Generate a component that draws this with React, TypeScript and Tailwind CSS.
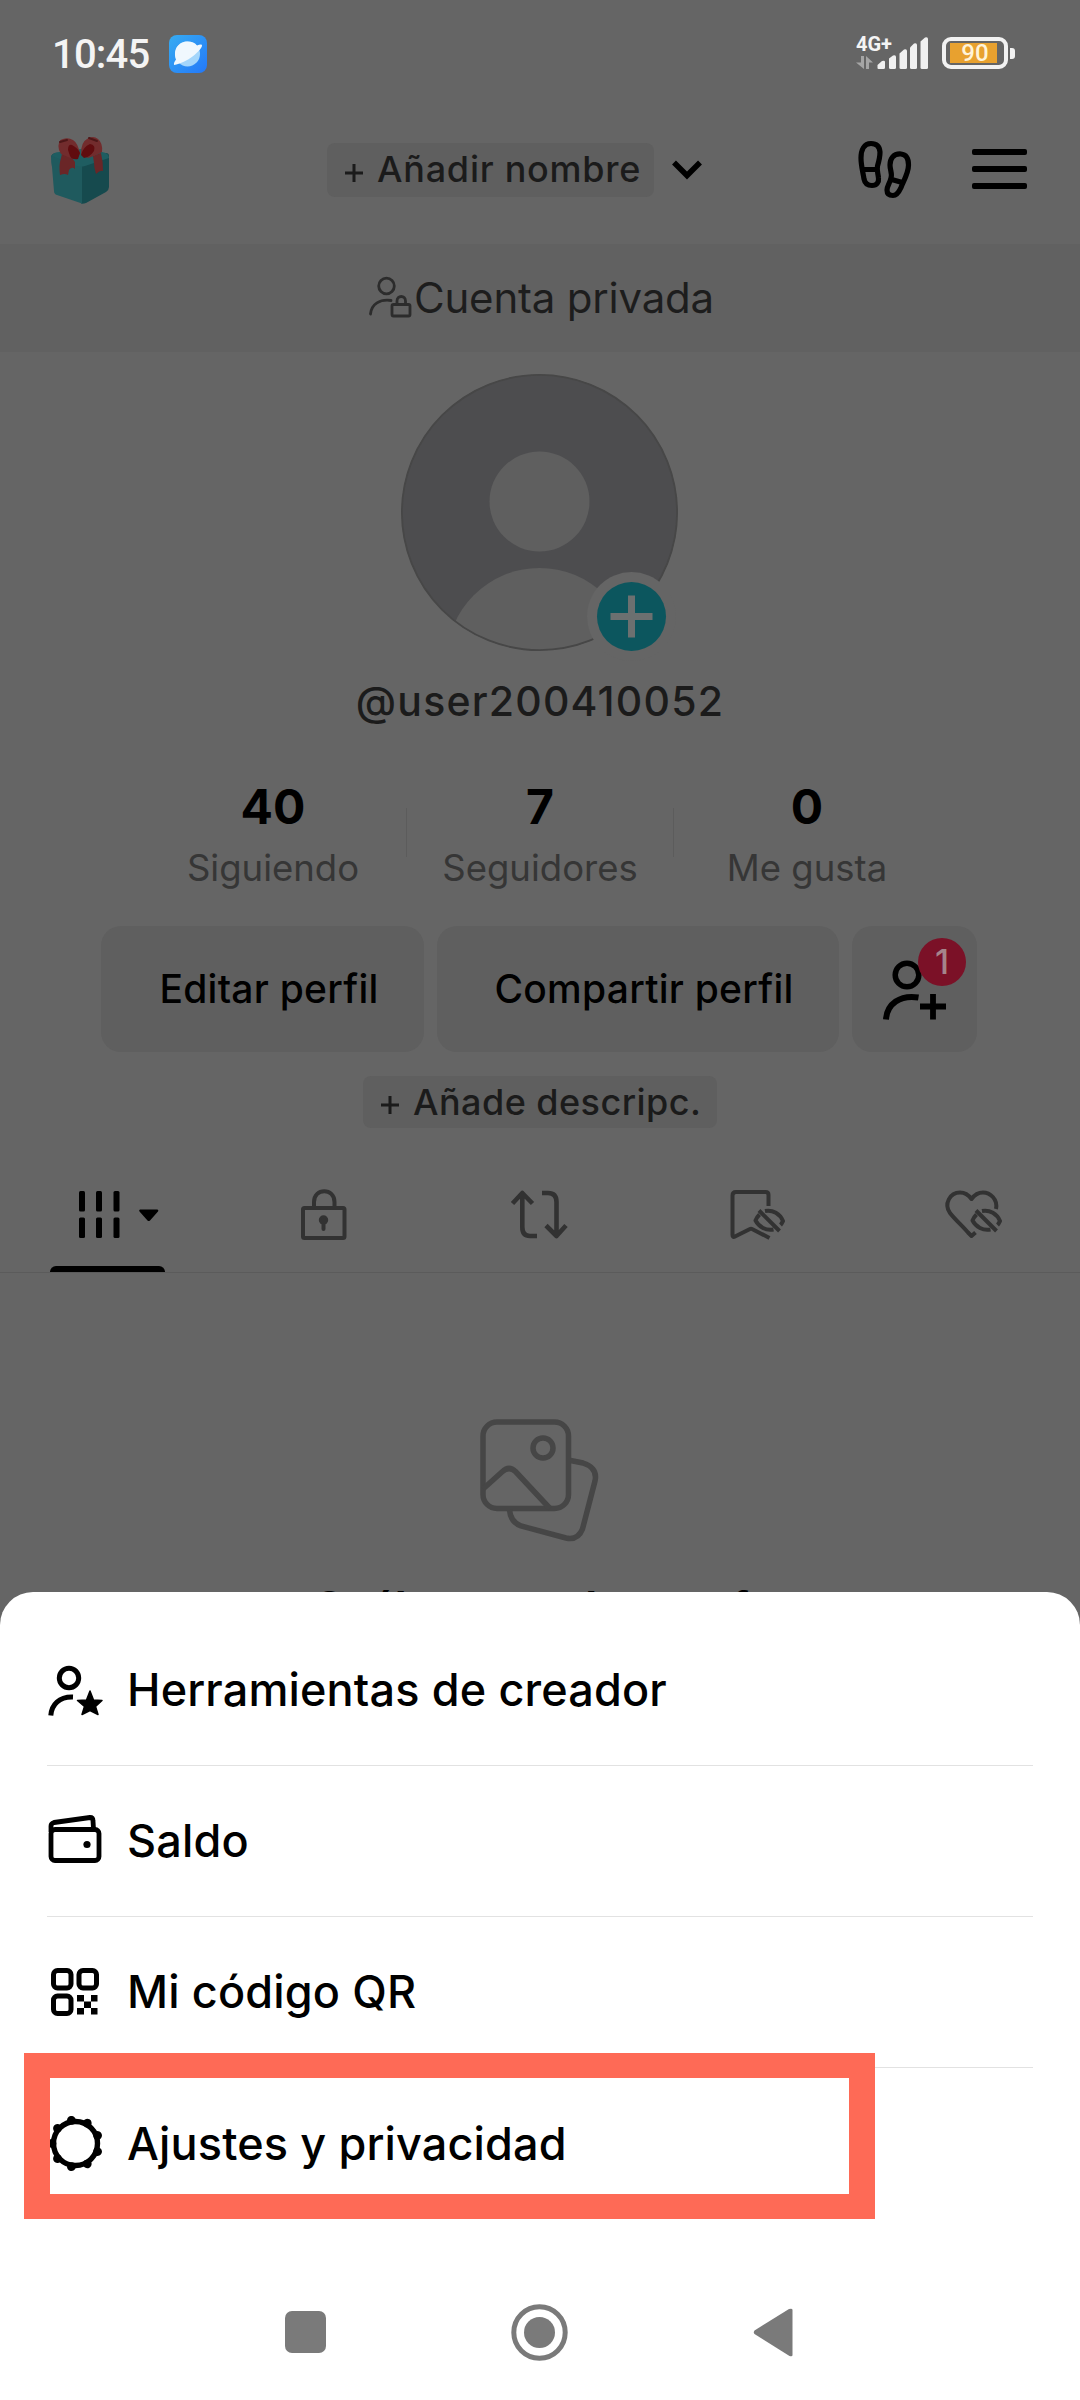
import React from "react";

function StatusBar() {
  return (
    <div className="flex h-[105px] items-center pl-[52px] pr-[65px] pt-[5px]">
      <span className="font-['Roboto',sans-serif] text-[40px] font-medium leading-[48px] tracking-[-0.8px] text-[#f4f4f4]">10:45</span>
      <svg className="ml-[19px] mt-[-2px]" width="38" height="38" viewBox="0 0 38 38">
        <defs>
          <linearGradient id="appBg" x1="0" y1="0" x2="1" y2="1">
            <stop offset="0" stopColor="#36acf2" />
            <stop offset="1" stopColor="#2478f8" />
          </linearGradient>
        </defs>
        <rect width="38" height="38" rx="8" fill="url(#appBg)" />
        <circle cx="18.500" cy="19" r="12.500" fill="#a4d6fb" />
        <path d="M5 30C4.500 28 6 26 7 24.500C3.500 14 10 6.500 18.500 6.500C23 6.500 26 8 28 10.500C30.500 9.500 33 9 33 10.500C33 15 18 28 5 30Z" fill="#f0f8fe" />
      </svg>
      <div className="ml-auto mt-[-4px] flex items-center">
        <div className="mr-[-11px] flex h-[36px] w-[32px] flex-col">
          <span className="whitespace-nowrap font-['Roboto',sans-serif] text-[20px] font-bold leading-[18px] text-[#f4f4f4]">4G+</span>
          <svg className="mt-[3px]" width="17" height="13" viewBox="0 0 17 13" fill="#a5a5a5">
            <path d="M5 0H8V13L0 6.500H5ZM10 13V0L17 6.500H13V13Z" />
          </svg>
        </div>
        <svg width="52" height="34" viewBox="877 37 52 34" fill="#f0f0f0">
          <path d="M877.500 69V66L882 62Q885 61 885 63V68.500Q885 70 883.500 70H878.500Q877.500 70 877.500 69Z" />
          <path d="M889 59.500L893 56.500Q896 55.500 896 58V68.500Q896 70 894.500 70H890.500Q889 70 889 68.500Z" />
          <path d="M899.500 54.500L904 50.500Q907 49.500 907 52V68.500Q907 70 905.500 70H901Q899.500 70 899.500 68.500Z" />
          <path d="M910 48.500L914 44.500Q917 43.500 917 46V68.500Q917 70 915.500 70H911.500Q910 70 910 68.500Z" />
          <path d="M920.500 42.500L925 38.500Q928 37.500 928 40V68.500Q928 70 926.500 70H922Q920.500 70 920.500 68.500Z" />
        </svg>
        <div className="ml-[13px] flex h-[32px] w-[66px] items-center rounded-[9px] border-[4px] border-[#f2f2f2] pl-[4px]">
          <div className="flex h-[20px] w-[47px] items-center justify-center bg-[#e8a12f] pl-[3px]">
            <span className="font-['Roboto',sans-serif] text-[24px] font-medium leading-[20px] tracking-[0.2px] text-[#fff3d8]">90</span>
          </div>
        </div>
        <div className="ml-[2px] h-[11px] w-[5px] rounded-r-[3px] bg-[#f2f2f2]" />
      </div>
    </div>
  );
}

function GiftIcon() {
  return (
    <svg className="ml-[40px]" width="90" height="90" viewBox="0 0 90 90">
      <path d="M11 32Q12 28 16 28L41 37L66 28Q69 28 69 31V62Q69 65 66 67L46 78Q43 79 41 78.500V44Z" fill="#164a4e" />
      <path d="M11 32Q11 29 15 29L39 37Q43 39 42 45V78.500L17 70Q14 69 14 66L12 42Q11 38 11 32Z" fill="#1f5a5e" />
      <path d="M12 31Q13 27 20 27L41 24L62 27Q69 28 69 33L45 41Q41 42 37 41Z" fill="#1f5d61" />
      <path d="M22 29L32 33L35 37V44Q32 41 29 45L28 50Q25 48 20 50Q19 42 20 37ZM53 31L61 28Q63 36 63 46Q60 45 56 49Q54 43 54 38Z" fill="#6a2627" />
      <path d="M19 25Q17 15 23 14Q28 12 33 15Q38 18 40 29L34 34Q27 32 21 29ZM41 29Q41 17 47 14Q53 10 58 14Q63 18 62 27Q57 30 48 33Z" fill="#722c2d" />
      <path d="M28 25Q28 19 32 20Q38 23 40 28L38 34Q32 35 30 31ZM41 30Q43 22 50 19Q56 20 54 26Q50 32 44 33Z" fill="#600c0f" />
      <path d="M20 17L27 15M49 13L57 16" stroke="#4d1718" strokeWidth="2" strokeLinecap="round" />
    </svg>
  );
}

function Header() {
  return (
    <header className="mb-[9px] flex h-[130px] items-center">
      <GiftIcon />
      <div className="ml-[197px] flex h-[54px] w-[327px] items-center rounded-[8px] bg-[#5f5f5f] pl-[18px] text-[#1b1b1b]">
        <svg width="18" height="18" viewBox="0 0 18 18" className="mt-[5px]" stroke="currentColor" strokeWidth="3">
          <path d="M9 0V18M0 9H18" />
        </svg>
        <span className="ml-[14px] mt-[-2px] whitespace-nowrap text-[36px] font-medium leading-[54px] tracking-[0.75px]">Añadir nombre</span>
      </div>
      <svg className="ml-[17px]" width="32" height="22" viewBox="671 159 32 22" fill="none" stroke="#000" strokeWidth="5.500">
        <path d="M674 162.500L687 175.500L700 162.500" />
      </svg>
      <svg className="ml-[151px]" width="62" height="68" viewBox="854 136 62 68" fill="none" stroke="#000" strokeWidth="5.200" strokeLinejoin="round">
        <path d="M871 143.500C864 143.500 861 150 861 158C861 166 863 172 864 179C865 184 868 185.500 872 185.500C877 185.500 879 182 878.500 178C878 173 876.500 170 877.500 166C879 161 880 157 880 152C879.500 146 876 143.500 871 143.500ZM862.500 169.500H877" />
        <path d="M901 154C893 153.500 890 159 890 165C890 170 892.500 174 891 178C890 183 887 186 887 190C887 194 889.500 195.500 893 195.500C897 195.500 899 192 901 187.500C903.500 181 908.500 173 908.500 165C908.500 158 906 154.500 901 154ZM890 179L904 183" />
      </svg>
      <div className="ml-[56px] mt-[-2px] flex w-[55px] flex-col gap-[11px]">
        <i className="h-[6px] rounded-[2px] bg-black" />
        <i className="h-[6px] rounded-[2px] bg-black" />
        <i className="h-[6px] rounded-[2px] bg-black" />
      </div>
    </header>
  );
}

function PrivateBand() {
  return (
    <div className="flex h-[108px] items-center bg-[#616161] pl-[367px] text-[#1d1d1d]">
      <svg className="mt-[-3px]" width="46" height="46" viewBox="367 273 46 46" fill="none" stroke="#2c2c2c" strokeWidth="2.800" strokeLinecap="round">
        <circle cx="386.500" cy="285" r="7.800" />
        <path d="M370.500 313C371.500 303 380 298 391 299.500" />
        <rect x="392" y="303.500" width="18" height="11.500" rx="1.500" />
        <path d="M397 303V300C397 294 405.500 294 405.500 300V303" />
      </svg>
      <span className="ml-[1px] whitespace-nowrap text-[42px] leading-[50px] tracking-[-0.2px]">Cuenta privada</span>
    </div>
  );
}

function Avatar() {
  return (
    <div className="relative mt-[22px] h-[277px] w-[278px] self-center">
      <svg width="277" height="277" viewBox="0 0 277 277">
        <defs>
          <clipPath id="face"><circle cx="138.500" cy="138.500" r="138" /></clipPath>
        </defs>
        <g clipPath="url(#face)">
          <rect width="277" height="277" fill="#4d4d4f" />
          <circle cx="138.500" cy="127.500" r="50" fill="#5f5f5f" />
          <circle cx="138.500" cy="287" r="93" fill="#5f5f5f" />
        </g>
        <circle cx="138.500" cy="138.500" r="137.600" fill="none" stroke="#474747" strokeWidth="1.800" />
      </svg>
      <svg className="absolute left-[186px] top-[198px]" width="90" height="90" viewBox="0 0 90 90">
        <circle cx="44.500" cy="44.500" r="44.500" fill="#656565" />
        <circle cx="44.500" cy="44.500" r="34.500" fill="#0c565e" />
        <path d="M44.500 23.500V65.500M23.500 44.500H65.500" stroke="#6c7070" strokeWidth="7" />
      </svg>
    </div>
  );
}

function Stat({ value, label }: { value: string; label: string }) {
  return (
    <div className="flex w-[266px] flex-col items-center">
      <span className="text-[48px] font-bold leading-[48px] text-black">{value}</span>
      <span className="mt-[14px] whitespace-nowrap text-[36.5px] leading-[46px] text-[#363636]">{label}</span>
    </div>
  );
}

function Profile() {
  return (
    <section className="flex flex-col">
      <Avatar />
      <p className="mt-[20px] text-center text-[41px] font-medium leading-[60px] tracking-[1.2px] text-[#1b1b1b]">@user200410052</p>
      <div className="mt-[52px] flex h-[107px] justify-center">
        <Stat value="40" label="Siguiendo" />
        <i className="mt-[25px] h-[49px] w-[1px] bg-[#5c5c5c]" />
        <Stat value="7" label="Seguidores" />
        <i className="mt-[25px] h-[49px] w-[1px] bg-[#5c5c5c]" />
        <Stat value="0" label="Me gusta" />
      </div>
      <div className="ml-[101px] mt-[36px] flex h-[126px] gap-[13px] text-[39px] font-medium text-black">
        <div className="flex w-[323px] items-center justify-center rounded-[20px] bg-[#5f5f5f] pl-[13px] tracking-[0.25px]">Editar perfil</div>
        <div className="flex w-[402px] items-center justify-center rounded-[20px] bg-[#5f5f5f] pl-[12px] tracking-[0.25px]">Compartir perfil</div>
        <div className="relative flex w-[125px] items-center justify-center rounded-[20px] bg-[#5f5f5f]">
          <svg width="66" height="66" viewBox="882 956 66 66" fill="none" stroke="#000">
            <circle cx="907" cy="975" r="11.800" strokeWidth="5.500" />
            <path d="M886 1019.500C887 1004 900 994.500 918.500 997.500" strokeWidth="6" />
            <path d="M933 994V1019.500M920 1006.500H946" strokeWidth="5.800" />
          </svg>
          <span className="absolute left-[66px] top-[12px] flex size-[48px] items-center justify-center rounded-full bg-[#7b1127] text-[34px] font-medium leading-[48px] text-[#a5858b]">1</span>
        </div>
      </div>
      <div className="mt-[24px] flex h-[52px] w-[354px] items-center self-center rounded-[8px] bg-[#5f5f5f] pl-[18px] text-[#1b1b1b]">
        <svg width="18" height="18" viewBox="0 0 18 18" className="mt-[5px]" stroke="currentColor" strokeWidth="3">
          <path d="M9 0V18M0 9H18" />
        </svg>
        <span className="ml-[14px] whitespace-nowrap text-[36px] font-medium leading-[52px] tracking-[0.45px]">Añade descripc.</span>
      </div>
    </section>
  );
}

const eyeOff = "M-4 -9C4 -10.500 11 -6 14 1C13 3 12.500 4 11.500 5M4.500 9.500C-3 11 -10 7 -13.500 0.500C-12.500 -2 -11.500 -3.500 -9.500 -5.500M-10 -9.500L10.500 11";

function Tabs() {
  return (
    <nav className="grid h-[145px] grid-cols-5 border-b border-[#5b5b5b] pt-[28px] text-[#323232]">
      <div className="relative flex items-center justify-center">
        <svg width="84" height="52" viewBox="66 1188 84 52" className="overflow-visible" fill="#000">
          {[79, 96, 113.5].map((x) => (
            <g key={x}>
              <rect x={x} y="1191" width="6" height="20.500" rx="1.500" />
              <rect x={x} y="1217.500" width="6" height="20.500" rx="1.500" />
            </g>
          ))}
          <path d="M140 1209.500H157.500Q159 1210.500 158 1211.500L150 1220.500Q148.700 1221.500 147.500 1220.500L139.500 1211.500Q138.500 1210 140 1209.500Z" />
        </svg>
        <i className="absolute bottom-0 left-[50px] h-[6px] w-[115px] rounded-t-[6px] bg-black" />
      </div>
      <div className="flex items-center justify-center">
        <svg width="54" height="60" viewBox="297 1184 54 60" fill="none" stroke="currentColor" strokeWidth="4">
          <rect x="303" y="1208" width="41.500" height="30" rx="1.500" />
          <path d="M314 1208V1202C314 1187.500 334.500 1187.500 334.500 1202V1208" />
          <circle cx="323.500" cy="1220" r="4.700" fill="currentColor" stroke="none" />
          <path d="M323.500 1220V1229" strokeLinecap="round" />
        </svg>
      </div>
      <div className="flex items-center justify-center">
        <svg width="60" height="60" viewBox="510 1184 60 60" fill="none" stroke="currentColor" strokeWidth="4.600">
          <path d="M512.500 1203.500L522.300 1193L532.500 1203.500M522.300 1193V1227Q522.300 1236 530 1236H537M542 1193H548Q556.500 1193 556.500 1202V1236M546 1225.500L556.500 1236L566 1225.500" strokeLinejoin="round" />
        </svg>
      </div>
      <div className="flex items-center justify-center">
        <svg width="60" height="60" viewBox="726 1184 60 60" fill="none" stroke="currentColor" strokeWidth="4" strokeLinejoin="round">
          <path d="M768.500 1206V1195Q768.500 1192 765.500 1192H736Q732.500 1192 732.500 1195.500V1235Q732.500 1238 735 1236.500L749.500 1229.200Q751 1228.500 752.500 1229.200L769.500 1238" />
          <path d={eyeOff} transform="translate(769 1220)" />
        </svg>
      </div>
      <div className="flex items-center justify-center">
        <svg width="60" height="60" viewBox="942 1184 60 60" fill="none" stroke="currentColor" strokeWidth="4" strokeLinejoin="round">
          <path d="M996 1209C998 1199 990 1192.500 983 1192.500C978 1192.500 974 1195.500 971.500 1199C969 1195.500 965 1192.500 960 1192.500C950 1192.500 943.500 1204 950 1213C955 1219.500 962 1225.500 968 1232.500L971.500 1236L975.500 1232.500" />
          <path d={eyeOff} transform="translate(986 1220)" />
        </svg>
      </div>
    </nav>
  );
}

function EmptyState() {
  return (
    <div className="flex flex-col items-center">
      <svg className="mt-[144px]" width="124" height="126" viewBox="478 1417 124 126" fill="none" stroke="#464646" strokeWidth="5.500">
        <rect x="483" y="1422" width="85.500" height="86.500" rx="14" />
        <circle cx="543" cy="1448" r="10" />
        <path d="M483 1489L502.500 1471.500Q509 1465.500 515.500 1471.500L550 1508.500" />
        <path d="M570.500 1460.500L583 1463Q598 1468 595 1481L582.500 1529Q578 1540.500 566 1538L521 1526Q510.500 1522 509.500 1510" />
      </svg>
      <p className="mt-[34px] whitespace-nowrap pl-[24px] text-[42px] font-bold leading-[60px] text-black [word-spacing:8px]">¿Cuál es una buena foto</p>
    </div>
  );
}

function Row({ icon, label, last }: { icon: React.ReactNode; label: string; last?: boolean }) {
  return (
    <li className={`relative mx-[47px] flex h-[151px] items-center ${last ? "" : "border-b border-[#e2e2e2]"}`}>
      <div className="w-[80px]">{icon}</div>
      <span className="whitespace-nowrap text-[45px] font-medium leading-[60px] tracking-[0.15px] text-black">{label}</span>
      {last && <i className="absolute left-[-23px] top-[-15px] h-[166px] w-[851px] border-[26px] border-y-[25px] border-[#fe6a56]" />}
    </li>
  );
}

function Sheet() {
  return (
    <section className="flex h-[808px] flex-col rounded-t-[33px] bg-white">
      <ul className="mt-[23px] flex flex-col">
        <Row
          label="Herramientas de creador"
          icon={
            <svg width="58" height="54" viewBox="47 1663 58 54" fill="none" stroke="#000" strokeWidth="5">
              <circle cx="69" cy="1678" r="9.700" />
              <path d="M50.800 1715.500C51.500 1705 59 1696.500 73 1697" />
              <path d="M90 1691L93.500 1700L102 1700.500L95.500 1706.500L98 1714.500L90 1710.500L82 1714.500L84.500 1706.500L77.500 1700.500L86.500 1700Z" fill="#000" strokeWidth="1.500" strokeLinejoin="round" />
            </svg>
          }
        />
        <Row
          label="Saldo"
          icon={
            <svg width="58" height="56" viewBox="47 1813 58 56" fill="none" stroke="#000" strokeWidth="4.800" strokeLinejoin="round">
              <rect x="51" y="1829.500" width="48" height="31" rx="4" />
              <path d="M51 1832V1826Q51 1823.500 54 1822.500L90 1817.500Q93 1817.500 93 1821L93.500 1829" />
              <circle cx="87" cy="1844.500" r="3.600" fill="#000" stroke="none" />
            </svg>
          }
        />
        <Row
          label="Mi código QR"
          icon={
            <svg width="58" height="56" viewBox="47 1964 58 56" fill="none" stroke="#000" strokeWidth="5">
              <rect x="53.500" y="1970.500" width="17.500" height="17.500" rx="4" />
              <rect x="79" y="1970.500" width="17.500" height="17.500" rx="4" />
              <rect x="53.500" y="1996" width="17.500" height="17.500" rx="4" />
              <path d="M77 1995h7v6.500h-7zM91 1995h6.500v6.500h-6.500zM84 2001.500h7v6.500h-7zM77 2008h7v6.500h-7zM91 2008h6.500v6.500h-6.500z" fill="#000" stroke="none" />
            </svg>
          }
        />
        <Row
          last
          label="Ajustes y privacidad"
          icon={
            <svg width="58" height="56" viewBox="46.500 2115 58 56">
              <circle cx="75" cy="2142.500" r="22" fill="none" stroke="#000" strokeWidth="5.400" />
              {[20, 60, 100, 140, 180, 220, 260, 300, 340].map((a) => (
                <circle key={a} cx="98.500" cy="2142.500" r="4.400" transform={`rotate(${a} 75 2142.5)`} />
              ))}
            </svg>
          }
        />
      </ul>
      <div className="mt-auto flex h-[136px] items-center pl-[285px]">
        <i className="h-[42px] w-[41px] rounded-[7px] bg-[#7a7a7a]" />
        <svg className="ml-[185px]" width="57" height="57" viewBox="0 0 57 57">
          <circle cx="28.500" cy="28.500" r="25.700" fill="none" stroke="#7a7a7a" strokeWidth="5" />
          <circle cx="28.500" cy="28.500" r="15.500" fill="#7a7a7a" />
        </svg>
        <svg className="ml-[185px]" width="40" height="49" viewBox="0 0 40 49" fill="#7a7a7a">
          <path d="M1.500 22.500L36 1Q39.500 0 39.500 2V47Q39.500 49 36.500 48L1.500 26Q0 24.500 1.500 22.500Z" />
        </svg>
      </div>
    </section>
  );
}

export default function App() {
  return (
    <div className="h-[2400px] w-[1080px] overflow-hidden bg-[#656565] font-['Inter',sans-serif]">
      <div className="flex h-[1592px] flex-col overflow-hidden *:shrink-0">
        <StatusBar />
        <Header />
        <PrivateBand />
        <Profile />
        <Tabs />
        <EmptyState />
      </div>
      <Sheet />
    </div>
  );
}
